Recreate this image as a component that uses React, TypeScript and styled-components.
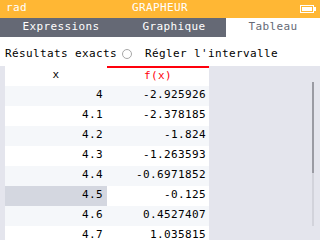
import styled, { createGlobalStyle } from "styled-components";

const GlobalStyle = createGlobalStyle`
    html, body {
        margin: 0;
        padding: 0;
        background: #ffffff;
    }
    body {
        font-family: "DejaVu Sans Mono", "Liberation Mono", monospace;
        font-size: 11px;
        letter-spacing: 0.38px;
    }
`;

const tabs = [
    { label: "Expressions", width: 122 },
    { label: "Graphique", width: 104 },
    { label: "Tableau", width: 94, selected: true },
];

const rows = [
    { x: "4", y: "-2.925926" },
    { x: "4.1", y: "-2.378185" },
    { x: "4.2", y: "-1.824" },
    { x: "4.3", y: "-1.263593" },
    { x: "4.4", y: "-0.6971852" },
    { x: "4.5", y: "-0.125", selected: true },
    { x: "4.6", y: "0.4527407" },
    { x: "4.7", y: "1.035815" },
];

type Shade = "light" | "white" | "select";

const shadeColor = (shade: Shade) =>
    shade === "light" ? "#f5f7fa" : shade === "select" ? "#d4d7e0" : "#ffffff";

export default function App() {
    return (
        <Screen>
            <GlobalStyle />
            <TitleBar>
                <Angle>rad</Angle>
                <Title>GRAPHEUR</Title>
                <Battery width="16" height="8" viewBox="0 0 16 8">
                    <rect x="0.5" y="0.5" width="13" height="7" fill="none" stroke="#fff" />
                    <rect x="2" y="2" width="10" height="4" fill="#fff" />
                    <rect x="14" y="2" width="2" height="4" fill="#fff" />
                </Battery>
            </TitleBar>

            <TabBar>
                {tabs.map((t) => (
                    <Tab key={t.label} $width={t.width} $selected={!!t.selected}>
                        {t.label}
                    </Tab>
                ))}
            </TabBar>

            <Options>
                <OptionText>Résultats exacts</OptionText>
                <Radio />
                <OptionText>Régler l'intervalle</OptionText>
            </Options>

            <TableArea>
                <LeftStrip />
                <Table>
                    <Row>
                        <HeaderCell>x</HeaderCell>
                        <HeaderCell $active>f(x)</HeaderCell>
                    </Row>
                    {rows.map((r, i) => {
                        const base: Shade = i % 2 === 0 ? "light" : "white";
                        return (
                            <Row key={r.x}>
                                <Cell $shade={r.selected ? "select" : base} $pad={4}>
                                    {r.x}
                                </Cell>
                                <Cell $shade={base} $pad={3}>
                                    {r.y}
                                </Cell>
                            </Row>
                        );
                    })}
                </Table>
                <Side>
                    <ScrollTrack>
                        <ScrollThumb />
                    </ScrollTrack>
                </Side>
            </TableArea>
        </Screen>
    );
}

// style
const Screen = styled.div`
    width: 320px;
    height: 240px;
    overflow: hidden;
    display: flex;
    flex-direction: column;
    background: #ffffff;
`;

const TitleBar = styled.div`
    height: 18px;
    flex: 0 0 18px;
    background: #ffb734;
    color: #ffffff;
    display: grid;
    grid-template-columns: 1fr auto 1fr;
    align-items: center;
    line-height: 16px;
    padding-bottom: 2px;
    box-sizing: border-box;
`;

const Angle = styled.span`
    padding-left: 6px;
`;

const Title = styled.span`
    text-align: center;
`;

const Battery = styled.svg`
    justify-self: end;
    margin-right: 4px;
    margin-top: 2px;
`;

const TabBar = styled.div`
    height: 19px;
    flex: 0 0 19px;
    display: flex;
    background: #656975;
`;

const Tab = styled.div<{ $width: number; $selected: boolean }>`
    flex: 0 0 ${(p) => p.$width}px;
    display: flex;
    align-items: center;
    justify-content: center;
    line-height: 16px;
    padding-bottom: 1px;
    color: ${(p) => (p.$selected ? "#656975" : "#ffffff")};
    background: ${(p) => (p.$selected ? "#ffffff" : "transparent")};
`;

const Options = styled.div`
    height: 29px;
    flex: 0 0 29px;
    box-sizing: border-box;
    padding: 4px 0 0 5px;
    display: flex;
    align-items: center;
    color: #000000;
`;

const OptionText = styled.span`
    white-space: pre;
`;

const Radio = styled.span`
    width: 8px;
    height: 8px;
    border: 1px solid #a7a7a7;
    border-radius: 50%;
    margin: 0 13px 0 5px;
    box-sizing: content-box;
`;

const TableArea = styled.div`
    flex: 1;
    display: flex;
    background: #e4e5ed;
`;

const LeftStrip = styled.div`
    flex: 0 0 5px;
`;

const Table = styled.div`
    flex: 0 0 204px;
    display: flex;
    flex-direction: column;
`;

const Row = styled.div`
    display: flex;
    height: 20px;
`;

const HeaderCell = styled.div<{ $active?: boolean }>`
    flex: 0 0 102px;
    box-sizing: border-box;
    background: #ffffff;
    text-align: center;
    line-height: ${(p) => (p.$active ? 15 : 17)}px;
    border-top: ${(p) => (p.$active ? "2px solid #ff000c" : "none")};
    color: ${(p) => (p.$active ? "#ff000c" : "#000000")};
`;

const Cell = styled.div<{ $shade: Shade; $pad: number }>`
    flex: 0 0 102px;
    box-sizing: border-box;
    background: ${(p) => shadeColor(p.$shade)};
    text-align: right;
    line-height: 17px;
    padding-right: ${(p) => p.$pad}px;
    color: #000000;
`;

const Side = styled.div`
    flex: 1;
    display: flex;
    justify-content: flex-end;
    padding: 16px 6px 0 0;
`;

const ScrollTrack = styled.div`
    width: 2px;
    height: 144px;
    background: #d2d3db;
    display: flex;
    flex-direction: column;
`;

const ScrollThumb = styled.div`
    height: 91px;
    background: #9a9ba3;
`;
